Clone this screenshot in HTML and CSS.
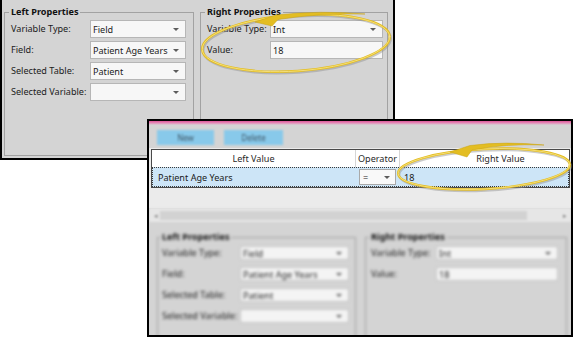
FILE: index.html
```html
<!DOCTYPE html>
<html>
<head>
<meta charset="utf-8">
<link rel="stylesheet" href="styles.css">
</head>
<body>
<div class="canvas">
  <div class="win win1">
    <div class="props">
      <fieldset class="group group-l">
        <legend>Left Properties</legend>
        <div class="form form-l">
          <span class="lbl">Variable Type:</span><div class="combo"><span>Field</span><i class="arrow"></i></div>
          <span class="lbl">Field:</span><div class="combo"><span>Patient Age Years</span><i class="arrow"></i></div>
          <span class="lbl">Selected Table:</span><div class="combo"><span>Patient</span><i class="arrow"></i></div>
          <span class="lbl">Selected Variable:</span><div class="combo"><span></span><i class="arrow"></i></div>
        </div>
      </fieldset>
      <fieldset class="group group-r">
        <legend>Right Properties</legend>
        <div class="form form-r">
          <span class="lbl">Variable Type:</span><div class="combo"><span>Int</span><i class="arrow"></i></div>
          <span class="lbl">Value:</span><div class="combo text"><span>18</span></div>
        </div>
      </fieldset>
    </div>
  </div>

  <div class="win win2">
    <div class="accent"></div>
    <div class="toolbar">
      <button class="tbtn tbtn-new">New</button>
      <button class="tbtn tbtn-del">Delete</button>
    </div>
    <div class="gridarea">
      <div class="grid">
        <div class="hcell c1">Left Value</div>
        <div class="hcell c2">Operator</div>
        <div class="hcell c3">Right Value</div>
        <div class="row">
          <div class="rcell c1">Patient Age Years</div>
          <div class="rcell c2"><div class="opcombo"><span>=</span><i class="arrow"></i></div></div>
          <div class="rcell c3">18</div>
        </div>
      </div>
    </div>
    <div class="hscroll">
      <span class="sarrow">&#9666;</span>
      <div class="thumb"></div>
      <span class="sarrow">&#9656;</span>
    </div>
    <div class="lower">
      <fieldset class="group lgroup-l">
        <legend>Left Properties</legend>
        <div class="form lform-l">
          <span class="lbl">Variable Type:</span><div class="combo sm"><span>Field</span><i class="arrow"></i></div>
          <span class="lbl">Field:</span><div class="combo sm"><span>Patient Age Years</span><i class="arrow"></i></div>
          <span class="lbl">Selected Table:</span><div class="combo sm"><span>Patient</span><i class="arrow"></i></div>
          <span class="lbl">Selected Variable:</span><div class="combo sm"><span></span><i class="arrow"></i></div>
        </div>
      </fieldset>
      <fieldset class="group lgroup-r">
        <legend>Right Properties</legend>
        <div class="form lform-r">
          <span class="lbl">Variable Type:</span><div class="combo sm"><span>Int</span><i class="arrow"></i></div>
          <span class="lbl">Value:</span><div class="combo sm text"><span>18</span></div>
        </div>
      </fieldset>
    </div>
  </div>

  <svg class="annot" width="583" height="348" viewBox="0 0 583 348">
    <g fill="none" stroke-linecap="round">
      <ellipse cx="297" cy="44.5" rx="94" ry="28" transform="rotate(-4 297 44)" stroke="#8f8f8f" stroke-opacity="0.45" stroke-width="2.4"/>
      <ellipse cx="296" cy="43" rx="94" ry="28" transform="rotate(-4 296 43)" stroke="#e3bd22" stroke-width="2.4"/>
      <ellipse cx="296" cy="43" rx="94" ry="28" transform="rotate(-4 296 43)" stroke="#f8e58a" stroke-width="0.8"/>
      <ellipse cx="485" cy="170.5" rx="86" ry="20" transform="rotate(-3 485 170)" stroke="#8f8f8f" stroke-opacity="0.45" stroke-width="2.4"/>
      <ellipse cx="484" cy="169" rx="86" ry="20" transform="rotate(-3 484 169)" stroke="#e3bd22" stroke-width="2.4"/>
      <ellipse cx="484" cy="169" rx="86" ry="20" transform="rotate(-3 484 169)" stroke="#f8e58a" stroke-width="0.8"/>
    </g>
    <path d="M255 22 L276 15 Q320 10 365 14 Q320 13 278 19.5 L272 26 Z" fill="#e3bd22" stroke="#c9a210" stroke-width="0.5"/>
    <path d="M450 152 L470 145.5 Q505 141 544 145 Q505 143.5 472 150 L467 157 Z" fill="#e3bd22" stroke="#c9a210" stroke-width="0.5"/>
  </svg>
</div>
</body>
</html>
```
FILE: styles.css
```css
* { box-sizing: border-box; }
body {
  margin: 0;
  background: #fff;
  font-family: "Noto Sans", "Liberation Sans", sans-serif;
  font-size: 9.1px;
  color: #1b1b1b;
}
.canvas { position: relative; width: 583px; height: 348px; overflow: hidden; }

.win { position: absolute; background: #d4d4d4; overflow: hidden; }
.win1 {
  left: 0; top: 0; width: 395px; height: 160px;
  border: 2px solid #000; border-top: 0;
  padding: 6px 0 0 2px;
}
.props { display: flex; gap: 6px; }

.group {
  margin: 0;
  min-width: 0;
  border: 1px solid #a2a2a2;
}
.group legend {
  padding: 0 2px;
  margin-left: -2px;
  font-weight: bold;
  line-height: 12px;
  color: #111;
}
.group-l { width: 190px; height: 150px; padding: 2px 7px 0 6px; }
.group-r { width: 188px; height: 150px; padding: 2px 5px 0 6px; }

.form { display: grid; row-gap: 3px; align-items: center; }
.form-l { grid-template-columns: 79px 96px; }
.form-r { grid-template-columns: 63px 113px; }
.lbl { white-space: nowrap; line-height: 12px; }

.combo {
  height: 18px;
  border: 1px solid #b6b6b6;
  background: #f7f7f7;
  display: flex;
  align-items: center;
  padding-left: 2px;
  white-space: nowrap;
  overflow: hidden;
}
.arrow {
  margin-left: auto;
  margin-right: 6px;
  width: 0; height: 0;
  border-left: 3px solid transparent;
  border-right: 3px solid transparent;
  border-top: 3px solid #5c5c5c;
}

/* second window */
.win2 {
  left: 147px; top: 119px; width: 426px; height: 218px;
  border: 2px solid #000;
  display: flex; flex-direction: column;
}
.accent { height: 4px; flex: none; background: linear-gradient(#dd5597, #e58dba 50%, #d4d4d4); }
.toolbar { height: 23px; flex: none; padding: 5px 0 0 8px; display: flex; gap: 10px; }
.tbtn {
  height: 15px; border: 0; padding: 0;
  background: #88c9ea;
  font: inherit; font-size: 8px; color: #3e5565;
  filter: blur(1px);
}
.tbtn-new { width: 57px; }
.tbtn-del { width: 59px; }

.gridarea { height: 60px; flex: none; background: #ebebeb; padding: 1px 1px 0 2px; }
.grid {
  border: 1px solid #4a4a4a;
  background: #fff;
  display: grid;
  grid-template-columns: 204px 44px 1fr;
}
.hcell {
  height: 17px; line-height: 17px;
  text-align: center;
  border-right: 1px solid #d6d6d6;
  color: #2a2a2a;
  white-space: nowrap;
}
.hcell.c3 { border-right: 0; padding-left: 32px; }
.row {
  grid-column: 1 / -1;
  display: grid;
  grid-template-columns: 203px 44px 1fr;
  height: 20px;
  background: #cde5f7;
  border: 1px dotted #3a3a3a;
}
.rcell { display: flex; align-items: center; white-space: nowrap; }
.rcell.c1 { padding-left: 5px; }
.rcell.c2 { padding-left: 3px; }
.rcell.c3 { padding-left: 4px; }
.opcombo {
  width: 37px; height: 16px;
  border: 1px solid #a9a9a9;
  background: #f9f9f9;
  display: flex; align-items: center;
  padding-left: 3px;
}
.opcombo .arrow { margin-right: 5px; }

.hscroll {
  height: 14px; flex: none;
  display: flex; align-items: center;
  background: #e6e6e6;
  padding: 0 4px 0 5px;
  gap: 2px;
  filter: blur(0.8px);
  color: #8a8a8a;
  font-size: 7px;
}
.thumb { width: 367px; height: 9px; background: #d2d2d2; }
.hscroll .sarrow:last-child { margin-left: auto; }

.lower {
  flex: 1;
  display: flex; gap: 9px;
  padding: 9px 0 0 8px;
  filter: blur(1.4px);
}
.lgroup-l { width: 199px; height: 130px; padding: 3px 0 0 4px; flex: none; }
.lgroup-r { width: 202px; height: 130px; padding: 3px 0 0 5px; flex: none; }
.lform-l { grid-template-columns: 78px 109px; row-gap: 7px; }
.lform-r { grid-template-columns: 65px 122px; row-gap: 7px; }
.combo.sm { height: 14px; background: #f4f4f4; border-color: #c4c4c4; }

.annot { position: absolute; left: 0; top: 0; pointer-events: none; }
```
